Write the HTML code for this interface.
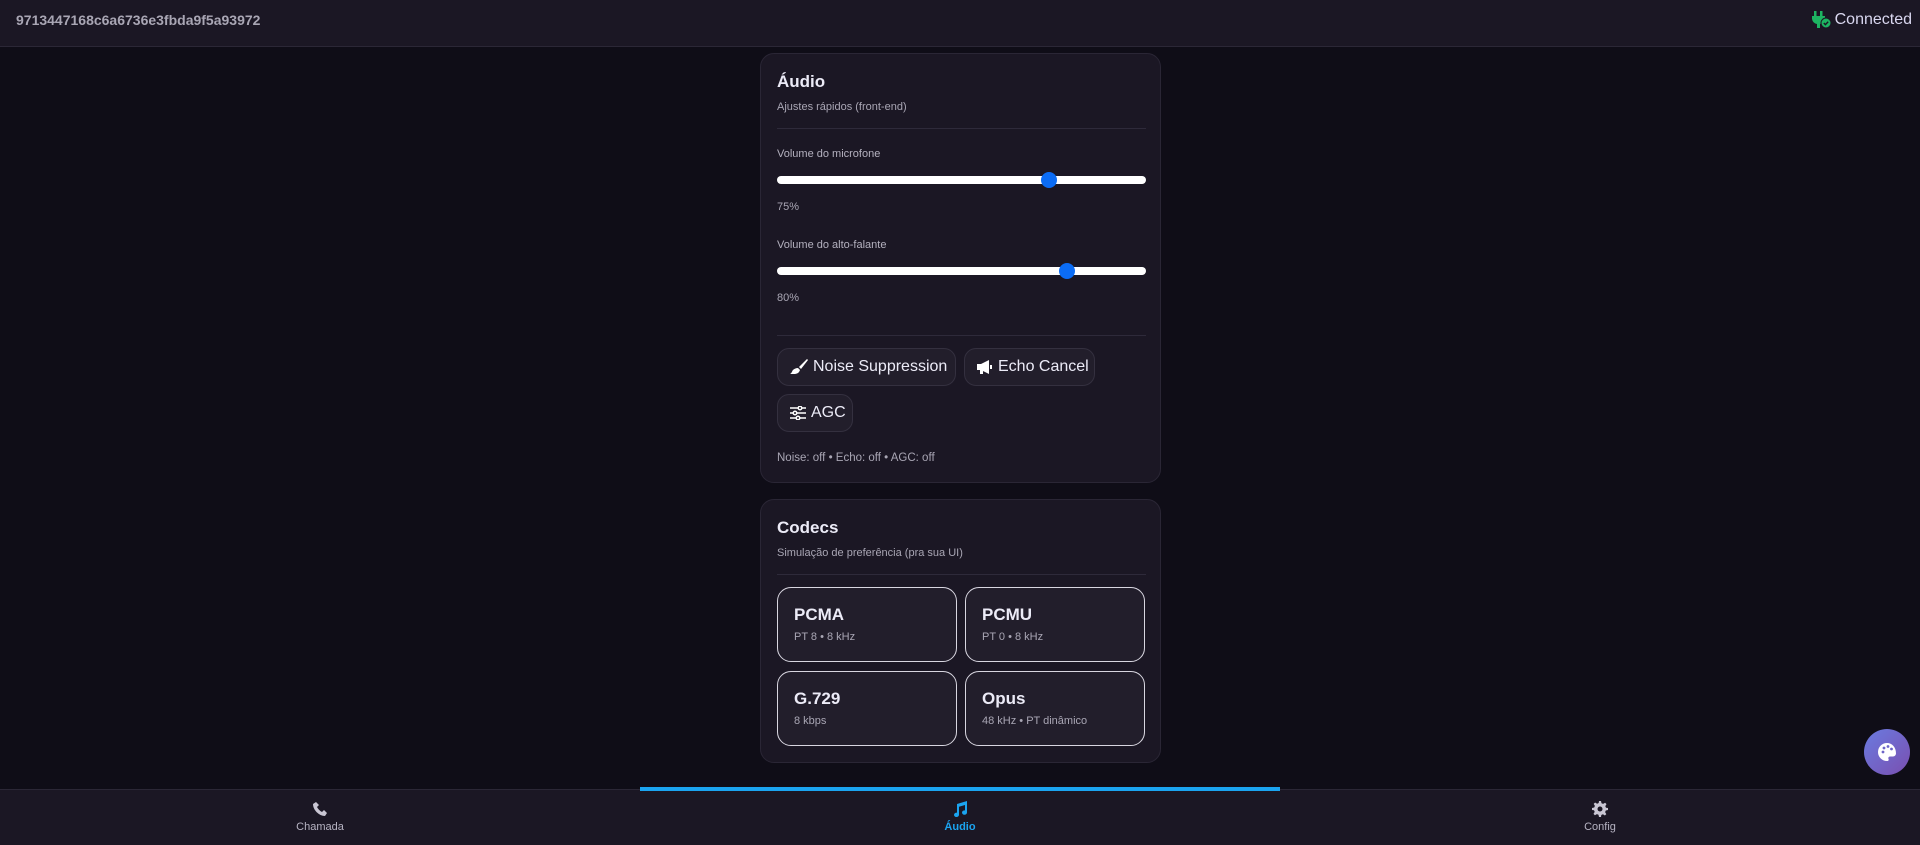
<!DOCTYPE html>
<html><head><meta charset="utf-8"><style>
*{box-sizing:border-box;margin:0;padding:0}
body{width:1920px;height:845px;background:#0f0d17;font-family:"Liberation Sans",sans-serif;position:relative;overflow:hidden;color:#e8e6f4}
.top{position:absolute;left:0;top:0;width:1920px;height:47px;background:#1b1724;border-bottom:1px solid #2b2736}
.hash{position:absolute;left:16px;top:12px;font-size:14px;font-weight:bold;color:#a9a6b4}
.conn{position:absolute;right:8px;top:11px;font-size:16px;color:#d9d7ef;display:flex;align-items:center;gap:3px}
.card{position:absolute;left:760px;width:401px;background:#1b1724;border:1px solid #2a2635;border-radius:14px}
.abs{position:absolute}
.t{left:16px;font-size:17px;font-weight:bold;color:#ecebf7}
.s{left:16px;font-size:11px;color:#a9a6b4}
.div{position:absolute;left:16px;width:369px;height:1px;background:#2e2a3a}
.track{position:absolute;left:16px;width:369px;height:8px;border-radius:4px;background:#fff}
.thumb{position:absolute;width:16px;height:16px;border-radius:50%;background:#0b6cf5;top:-4px}
.btn{position:absolute;height:38px;border:1px solid #34303f;background:#221e2b;border-radius:12px;color:#ecebf7;font-size:16px;display:flex;align-items:center;padding-left:12px;gap:5px}
.cod{position:absolute;width:180px;height:75px;border:1.5px solid #d8d6e0;border-radius:14px;background:#221e2b}
.cod b{position:absolute;left:16px;top:17px;font-size:17px;color:#ecebf7}
.cod span{position:absolute;left:16px;top:43px;font-size:11px;color:#a9a6b4}
.nav{position:absolute;left:0;top:789px;width:1920px;height:56px;background:#1b1724;border-top:1px solid #2b2736}
.bar{position:absolute;left:640px;top:787px;width:640px;height:4px;background:#1ba4f0}
.ni{position:absolute;top:0;width:200px;text-align:center;font-size:11px;color:#b6b3c2}
.ni svg{display:block;margin:11px auto 4px}
.pal{position:absolute;left:1864px;top:729px;width:46px;height:46px;border-radius:50%;background:linear-gradient(135deg,#6a7be0,#7a4fb0);display:flex;align-items:center;justify-content:center}
</style></head><body>
<div class="top"><div class="hash">9713447168c6a6736e3fbda9f5a93972</div>
<div class="conn"><svg width="20" height="18" viewBox="0 0 20 18"><rect x="2" y="0" width="2.5" height="6" fill="#1db462"/><rect x="8" y="0" width="2.5" height="6" fill="#1db462"/><path d="M0 5h13v3a6 6 0 0 1-5 5v4H5v-4a6 6 0 0 1-5-5z" fill="#1db462"/><circle cx="14" cy="12" r="5" fill="#1db462" stroke="#1b1724" stroke-width="1"/><path d="M11.8 12l1.6 1.6 2.8-2.8" stroke="#1b1724" stroke-width="1.4" fill="none"/></svg>Connected</div></div>

<div class="card" style="top:53px;height:430px">
<div class="abs t" style="top:18px">Áudio</div>
<div class="abs s" style="top:47px">Ajustes rápidos (front-end)</div>
<div class="div" style="top:74px"></div>
<div class="abs s" style="top:94px;color:#b4b1bf">Volume do microfone</div>
<div class="track" style="top:122px"><div class="thumb" style="left:264px"></div></div>
<div class="abs s" style="top:147px">75%</div>
<div class="abs s" style="top:185px;color:#b4b1bf">Volume do alto-falante</div>
<div class="track" style="top:213px"><div class="thumb" style="left:282px"></div></div>
<div class="abs s" style="top:238px">80%</div>
<div class="div" style="top:281px"></div>
<div class="btn" style="left:16px;top:294px;width:179px"><svg width="18" height="16" viewBox="0 0 18 16"><path d="M17 0L9 8l2 2 7-9z" fill="#fff"/><path d="M8 9l2 2c-1 3-3 4-6 4H0c2-1 2-3 3-4s3-2 5-2z" fill="#fff"/></svg><span>Noise Suppression</span></div>
<div class="btn" style="left:203px;top:294px;width:131px"><svg width="16" height="14" viewBox="0 0 16 14"><path d="M0 4h4l8-4v14l-8-4H0z M3 10h3v4H3z M13 5h2v4h-2z" fill="#fff"/></svg><span>Echo Cancel</span></div>
<div class="btn" style="left:16px;top:340px;width:76px"><svg width="16" height="14" viewBox="0 0 16 14" fill="none" stroke="#fff" stroke-width="1.5"><path d="M0 2h16M0 7h16M0 12h16"/><circle cx="10" cy="2" r="1.8" fill="#221e2b"/><circle cx="5" cy="7" r="1.8" fill="#221e2b"/><circle cx="8" cy="12" r="1.8" fill="#221e2b"/></svg><span>AGC</span></div>
<div class="abs s" style="top:398px;font-size:11.5px">Noise: off • Echo: off • AGC: off</div>
</div>

<div class="card" style="top:499px;height:264px">
<div class="abs t" style="top:18px">Codecs</div>
<div class="abs s" style="top:47px">Simulação de preferência (pra sua UI)</div>
<div class="div" style="top:74px"></div>
<div class="cod" style="left:16px;top:87px"><b>PCMA</b><span>PT 8 • 8 kHz</span></div>
<div class="cod" style="left:204px;top:87px"><b>PCMU</b><span>PT 0 • 8 kHz</span></div>
<div class="cod" style="left:16px;top:171px"><b>G.729</b><span>8 kbps</span></div>
<div class="cod" style="left:204px;top:171px"><b>Opus</b><span>48 kHz • PT dinâmico</span></div>
</div>

<div class="pal"><svg width="20" height="20" viewBox="0 0 20 20"><path d="M10 1a9 9 0 0 0 0 18c1.5 0 2-1 1.5-2s0-2.5 1.5-2.5H16a3 3 0 0 0 3-3C19 5 15 1 10 1z" fill="#fff"/><circle cx="6" cy="10" r="1.4" fill="#6d65c8"/><circle cx="7" cy="6" r="1.4" fill="#6d65c8"/><circle cx="11" cy="4.5" r="1.4" fill="#6d65c8"/><circle cx="14.5" cy="7" r="1.4" fill="#6d65c8"/></svg></div>

<div class="nav">
<div class="ni" style="left:220px"><svg width="16" height="16" viewBox="0 0 16 16"><path d="M4 1l3 3-2 2c1 2 3 4 5 5l2-2 3 3-2 3C7 15 1 9 1 3z" fill="#c9c6d3"/></svg>Chamada</div>
<div class="ni" style="left:860px;color:#1ba4f0;font-weight:bold"><svg width="18" height="18" viewBox="0 0 18 18" style="margin-top:10px;margin-bottom:3px"><path d="M6 4l10-3v11.5a2.5 2.2 0 1 1-2-2.1V5L8 6.8v8a2.5 2.2 0 1 1-2-2.1z" fill="#1ba4f0"/></svg>Áudio</div>
<div class="ni" style="left:1500px"><svg width="16" height="16" viewBox="0 0 16 16"><path d="M7 0h2l.5 2.2 1.6.7 2-1.2 1.4 1.4-1.2 2 .7 1.6L16 7v2l-2.2.5-.7 1.6 1.2 2-1.4 1.4-2-1.2-1.6.7L9 16H7l-.5-2.2-1.6-.7-2 1.2-1.4-1.4 1.2-2-.7-1.6L0 9V7l2.2-.5.7-1.6-1.2-2 1.4-1.4 2 1.2 1.6-.7z" fill="#c9c6d3"/><circle cx="8" cy="8" r="2.5" fill="#1b1724"/></svg>Config</div>
</div>
<div class="bar"></div>
</body></html>
